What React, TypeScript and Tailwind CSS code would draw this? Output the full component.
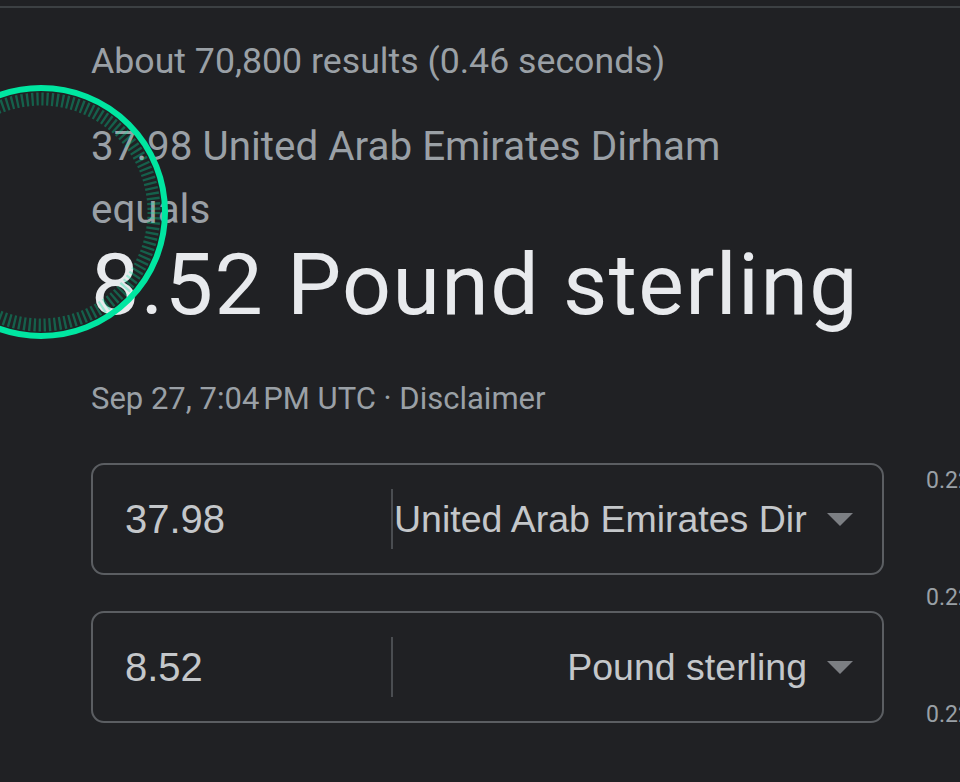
import * as React from 'react'

const sans = { fontFamily: 'Roboto, "Liberation Sans", sans-serif' }
const arial = { fontFamily: '"Liberation Sans", Arial, sans-serif' }

function Caret() {
  return (
    <svg width="26" height="13" viewBox="0 0 26 13" className="shrink-0">
      <path d="M0 0 L26 0 L13 13 Z" fill="#7c7f83" />
    </svg>
  )
}

function CurrencyRow({ amount, currency, right }: { amount: string; currency: string; right?: boolean }) {
  return (
    <div className="flex h-[112px] items-center rounded-[13px] border-2 border-[#5b5e62]" style={arial}>
      <div className="w-[298px] pl-[32px] text-[40px] leading-none text-[#c4c7ca]">{amount}</div>
      <div className="h-[60px] w-[2px] bg-[#4a4d51]" />
      <div
        className={`min-w-0 flex-1 overflow-hidden whitespace-nowrap pl-[1px] text-[37.5px] leading-[48px] text-[#c4c7ca] ${
          right ? 'text-right' : 'text-left'
        }`}
      >
        {currency}
      </div>
      <div className="ml-[20px] mr-[29px] flex items-center">
        <Caret />
      </div>
    </div>
  )
}

function Highlight() {
  return (
    <svg className="pointer-events-none absolute left-0 top-0" width="960" height="782">
      <circle
        cx="41"
        cy="212"
        r="113"
        fill="none"
        stroke="rgba(0,229,160,0.32)"
        strokeWidth="13"
        strokeDasharray="2.3 2.77"
      />
      <circle cx="41" cy="212" r="124" fill="none" stroke="#00e6a1" strokeWidth="6" />
    </svg>
  )
}

export default function App() {
  return (
    <div className="relative h-[782px] w-[960px] overflow-hidden bg-[#202124]">
      <div className="mt-[6px] h-[2px] bg-[#3c4043]" />
      <div className="pl-[91px]">
        <div className="mt-[33px] text-[35.7px] leading-[40px] text-[#9aa0a6]" style={sans}>
          About 70,800 results (0.46 seconds)
        </div>
        <div className="mt-[34px] text-[40.4px] leading-[63px] text-[#9aa0a6]" style={sans}>
          <div>37.98 United Arab Emirates Dirham</div>
          <div>equals</div>
        </div>
        <div className="mt-[9px] text-[86px] leading-[70px] tracking-[1.4px] text-[#e8eaed]" style={sans}>
          8.52 Pound sterling
        </div>
        <div className="mt-[59px] text-[31px] leading-[40px] text-[#9aa0a6]" style={sans}>
          Sep 27, 7:04{'\u202f'}PM UTC · Disclaimer
        </div>
        <div className="mt-[44px] flex">
          <div className="flex w-[793px] shrink-0 flex-col gap-[36px]">
            <CurrencyRow amount="37.98" currency="United Arab Emirates Dirham" />
            <CurrencyRow amount="8.52" currency="Pound sterling" right />
          </div>
          <div
            className="ml-[42px] flex flex-col gap-[94px] pt-[6px] text-[23px] leading-[23px] text-[#9aa0a6] whitespace-nowrap"
            style={sans}
          >
            <div>0.2260</div>
            <div>0.2250</div>
            <div>0.2240</div>
          </div>
        </div>
      </div>
      <Highlight />
    </div>
  )
}
